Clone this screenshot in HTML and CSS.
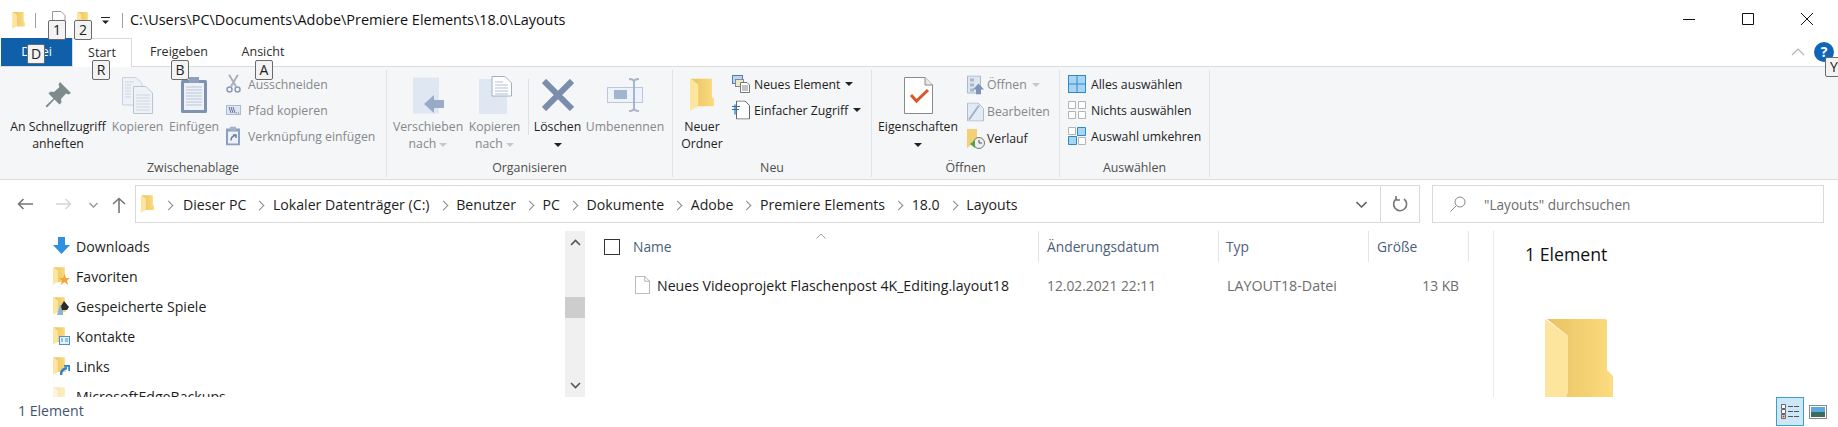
FILE: index.html
```html
<!DOCTYPE html>
<html lang="de">
<head>
<meta charset="utf-8">
<title>Layouts</title>
<link rel="stylesheet" href="styles.css">
</head>
<body>
<svg class="sprite" aria-hidden="true">
  <defs>
    <linearGradient id="fback" x1="0" y1="0" x2="1" y2="0"><stop offset="0" stop-color="#e9c263"/><stop offset="1" stop-color="#fbdc7e"/></linearGradient>
    <symbol id="folder" viewBox="0 0 68 92">
      <path fill="url(#fback)" d="M2 0H60q2 0 2 2V51L68 57V78H21L23 72V17Z"/>
      <path fill="#fde59e" d="M0 0L23 17V72L21 80L0 90Z"/>
    </symbol>
    <symbol id="doc" viewBox="0 0 20 24">
      <path fill="#fff" stroke="currentColor" d="M.5.500H13L19.500 7V23.500H.5Z"/>
      <path fill="none" stroke="currentColor" d="M13 .5V7H19.500"/>
    </symbol>
  </defs>
</svg>

<header class="titlebar">
  <svg class="ic-folder-s"><use href="#folder"/></svg>
  <i class="tsep tsep-a"></i>
  <svg class="ic-qa-doc" viewBox="0 0 15 18"><path fill="#fff" stroke="#9a9a9a" d="M1.500.5H10L14 4.500V17.500H1.500Z"/><path stroke="#d9582a" fill="none" stroke-width="1.500" d="M7 12l2 2 3-5"/></svg>
  <svg class="ic-qa-folder"><use href="#folder"/></svg>
  <svg class="ic-caret-q" viewBox="0 0 9 8"><path fill="#222" d="M0 0H9V1H0ZM1 3.500H8L4.500 7Z"/></svg>
  <i class="tsep tsep-b"></i>
  <span class="path-title">C:\Users\PC\Documents\Adobe\Premiere Elements\18.0\Layouts</span>
  <div class="winctl">
    <svg viewBox="0 0 12 12"><path stroke="#111" d="M0 6.500H12"/></svg>
    <svg viewBox="0 0 12 12"><path fill="none" stroke="#111" d="M.5.500H11.500V11.500H.5Z"/></svg>
    <svg viewBox="0 0 12 12"><path stroke="#111" d="M0 0L12 12M12 0L0 12"/></svg>
  </div>
</header>

<nav class="tabs">
  <div class="tab tab-file">Datei</div>
  <div class="tab tab-start">Start</div>
  <div class="tab tab-share">Freigeben</div>
  <div class="tab tab-view">Ansicht</div>
  <svg class="collapse" viewBox="0 0 14 8"><path fill="none" stroke="#b4b4b4" stroke-width="1.200" d="M1 7L7 1L13 7"/></svg>
  <div class="help">?</div>
</nav>

<section class="ribbon">
  <div class="group g-clip">
    <div class="group-body">
      <div class="big w-pin">
        <div class="big-icon"><svg width="26" height="26" viewBox="0 0 26 26"><path fill="#7e8a8c" d="M15 0L26 11L23.500 12.500L21 11.500L16 17L16.500 20.500L14.500 22.500L9.500 17.500L2 25.500L0.500 24L8.500 16.500L3.500 11.500L5.500 9.500L9 10L14.500 5L13.500 2.500Z"/></svg></div>
        <div class="label">An Schnellzugriff<br>anheften</div>
      </div>
      <div class="big w-copy off">
        <div class="big-icon"><svg width="31" height="37" viewBox="0 0 31 37"><path fill="#eef2f7" stroke="#c6d0de" d="M.5.500H14L20 6.500V28H.5Z"/><path fill="#eef2f7" stroke="#b8c5d6" d="M11.500 9.500H24L30.500 16V36.500H11.500Z"/><path stroke="#cdd6e2" d="M3 5H12M3 8H9M3 11H9M3 14H9M3 17H9M3 20H9M14 18H28M14 21H28M14 24H28M14 27H28M14 30H28M14 33H28"/></svg></div>
        <div class="label">Kopieren</div>
      </div>
      <div class="big w-paste off">
        <div class="big-icon"><svg width="26" height="36" viewBox="0 0 26 36"><rect y="3" width="26" height="33" rx="1.500" fill="#7f92b2"/><rect x="8" y="0" width="10" height="6" fill="#8fa0bc"/><rect x="3" y="6" width="20" height="27" fill="#eef2f8"/><path stroke="#b9c6da" d="M5 10H21M5 13H21M5 16H21M5 19H21M5 22H21M5 25H21M5 28H21"/></svg></div>
        <div class="label">Einfügen</div>
      </div>
      <div class="smallcol off">
        <div class="small"><svg class="s-ic" width="15" height="19" viewBox="0 0 15 19"><path stroke="#a9b2bd" stroke-width="2" fill="none" d="M3 0L10 12M12 0L5 12"/><circle cx="3.500" cy="15" r="2.500" fill="none" stroke="#8c9cb4" stroke-width="1.500"/><circle cx="11.500" cy="15" r="2.500" fill="none" stroke="#8c9cb4" stroke-width="1.500"/></svg><span>Ausschneiden</span></div>
        <div class="small"><svg class="s-ic" width="15" height="10" viewBox="0 0 15 10"><rect x=".5" y=".5" width="14" height="9" fill="#dce6f4" stroke="#a9bad4"/><path stroke="#66758c" d="M3 2L5 8M5 2L7 8M7 2L9 8M10 8H11M12 8H13"/></svg><span>Pfad kopieren</span></div>
        <div class="small"><svg class="s-ic" width="14" height="19" viewBox="0 0 14 19"><rect y="2" width="14" height="17" fill="#8ba0bf"/><rect x="4" width="6" height="4" fill="#a3b3cb"/><rect x="2" y="5" width="10" height="12" fill="#eef2f8"/><path stroke="#6a7f9f" stroke-width="1.500" fill="none" d="M5 14Q5 10 9 9M7 8.500H10V11.500"/></svg><span>Verknüpfung einfügen</span></div>
      </div>
    </div>
    <div class="group-label">Zwischenablage</div>
  </div>

  <div class="group g-org">
    <div class="group-body">
      <div class="big w-move off">
        <div class="big-icon"><svg width="32" height="37" viewBox="0 0 32 37"><rect x="1" y=".5" width="26" height="36" fill="#dfe7f3"/><path fill="#8c9fbd" d="M12 27L22 18V23H32V31H22V36Z" opacity=".85"/></svg></div>
        <div class="label">Verschieben<br>nach <i class="car car-off"></i></div>
      </div>
      <div class="big w-copyto off">
        <div class="big-icon"><svg width="34" height="39" viewBox="0 0 34 39"><rect x="1" y="3" width="28" height="35" fill="#dfe7f3"/><path fill="#fff" stroke="#9fb0c8" d="M14 .5H27L33.500 7V20H14Z"/><path stroke="#b3c0d3" d="M17 6H25M17 9H30M17 12H30M17 15H30M17 18H30"/></svg></div>
        <div class="label">Kopieren<br>nach <i class="car car-off"></i></div>
      </div>
      <i class="vsep"></i>
      <div class="big w-del">
        <div class="big-icon"><svg width="32" height="32" viewBox="0 0 32 32"><path stroke="#7b8dac" stroke-width="6" d="M2 2L30 30M30 2L2 30"/></svg></div>
        <div class="label">Löschen<br><i class="car"></i></div>
      </div>
      <div class="big w-ren off">
        <div class="big-icon"><svg width="36" height="34" viewBox="0 0 36 34"><rect x=".5" y="9.500" width="35" height="15" fill="#eef3fa" stroke="#b9c8de"/><rect x="7" y="12" width="13" height="9" fill="#a3b4cf"/><path stroke="#a6b5cd" stroke-width="2" fill="none" d="M22 1Q27 1 27 4V30Q27 33 22 33M32 1Q27 1 27 4M27 30Q27 33 32 33"/></svg></div>
        <div class="label">Umbenennen</div>
      </div>
    </div>
    <div class="group-label">Organisieren</div>
  </div>

  <div class="group g-new">
    <div class="group-body">
      <div class="big w-newf">
        <div class="big-icon"><svg class="ic-newf"><use href="#folder"/></svg></div>
        <div class="label">Neuer<br>Ordner</div>
      </div>
      <div class="smallcol">
        <div class="small"><svg class="s-ic" width="18" height="18" viewBox="0 0 18 18"><rect x=".5" y=".5" width="10" height="8" fill="#bcd6ee" stroke="#4d7fae"/><rect x="3.500" y="4.500" width="8" height="7" fill="#f0e7c4" stroke="#889"/><path fill="#fff" stroke="#777" d="M8.500 7.500H15L17.500 10V17.500H8.500Z"/><path stroke="#888" d="M10 11H16M10 13H16M10 15H16"/></svg><span>Neues Element <i class="car"></i></span></div>
        <div class="small"><svg class="s-ic" width="18" height="19" viewBox="0 0 18 19"><path fill="#fff" stroke="#666" d="M4.500 .5H13L17.500 5V18.500H4.500Z"/><path stroke="#2c72b5" stroke-width="1.200" d="M0 6H8M0 9H7M3 4V14"/></svg><span>Einfacher Zugriff <i class="car"></i></span></div>
      </div>
    </div>
    <div class="group-label">Neu</div>
  </div>

  <div class="group g-open">
    <div class="group-body">
      <div class="big w-prop">
        <div class="big-icon"><svg width="29" height="37" viewBox="0 0 29 37"><path fill="#fff" stroke="#8a8a8a" d="M.5.500H21L28.500 8V36.500H.5Z"/><path fill="#e8e8e8" stroke="#8a8a8a" d="M21 .5V8H28.500"/><path fill="none" stroke="#d9582a" stroke-width="3" d="M7 18L12.500 24L24 13"/></svg></div>
        <div class="label">Eigenschaften<br><i class="car"></i></div>
      </div>
      <div class="smallcol sc-open">
        <div class="small off"><svg class="s-ic" width="17" height="19" viewBox="0 0 17 19"><rect x=".5" y=".5" width="13" height="17" fill="#dfe6f0" stroke="#aab8cc"/><path fill="#aab8cc" d="M3 3H7V6H3ZM3 8H7V11H3ZM3 13H7V16H3Z"/><path fill="#7f94b2" d="M6 14L11.500 8L17 14H14V19H9V14Z"/></svg><span>Öffnen <i class="car car-off"></i></span></div>
        <div class="small off"><svg class="s-ic" width="17" height="19" viewBox="0 0 17 19"><path fill="#e3eaf4" stroke="#aebdd2" d="M.5.500H11L16.500 6V18.500H.5Z"/><path fill="none" stroke="#9fb0c9" stroke-width="2" d="M2 17L12 3"/></svg><span>Bearbeiten</span></div>
        <div class="small"><svg class="s-ic" width="18" height="20" viewBox="0 0 18 20"><path fill="#f3cf75" d="M0 0H10V14H6L0 19Z"/><circle cx="12" cy="14" r="5.500" fill="#eee" stroke="#777"/><path d="M12 11V14H15" stroke="#555" fill="none"/><path fill="#4fa24a" d="M3 15L8 11V19Z"/></svg><span>Verlauf</span></div>
      </div>
    </div>
    <div class="group-label">Öffnen</div>
  </div>

  <div class="group g-sel">
    <div class="group-body">
      <div class="smallcol">
        <div class="small"><svg class="s-ic" width="18" height="18" viewBox="0 0 18 18"><rect width="18" height="18" fill="#2f88c9"/><path fill="#a9d5f5" d="M1 1H8.500V8.500H1ZM9.500 1H17V8.500H9.500ZM1 9.500H8.500V17H1ZM9.500 9.500H17V17H9.500Z"/></svg><span>Alles auswählen</span></div>
        <div class="small"><svg class="s-ic" width="18" height="18" viewBox="0 0 18 18"><path fill="#fff" stroke="#b4b4b4" d="M.5.500H7.500V7.500H.5ZM10.500.5H17.500V7.500H10.500ZM.5 10.500H7.500V17.500H.5ZM10.500 10.500H17.500V17.500H10.500Z"/></svg><span>Nichts auswählen</span></div>
        <div class="small"><svg class="s-ic" width="18" height="18" viewBox="0 0 18 18"><path fill="#fff" stroke="#b4b4b4" d="M.5.500H7.500V7.500H.5ZM10.500 10.500H17.500V17.500H10.500Z"/><path fill="#a9d5f5" stroke="#2f88c9" d="M9.500.5H17.500V8.500H9.500ZM.5 9.500H8.500V17.500H.5Z"/></svg><span>Auswahl umkehren</span></div>
      </div>
    </div>
    <div class="group-label">Auswählen</div>
  </div>
</section>

<section class="addressrow">
  <svg class="nav-ic" width="16" height="12" viewBox="0 0 16 12"><path fill="none" stroke="#777" stroke-width="1.600" d="M16 6H1.500M6.500 1L1.500 6L6.500 11"/></svg>
  <svg class="nav-ic nav-fwd" width="16" height="12" viewBox="0 0 16 12"><path fill="none" stroke="#d6d6d6" stroke-width="1.600" d="M0 6H14.500M9.500 1L14.500 6L9.500 11"/></svg>
  <svg class="nav-ic nav-drop" width="9" height="6" viewBox="0 0 9 6"><path fill="none" stroke="#9a9a9a" stroke-width="1.500" d="M.5 1L4.500 5L8.500 1"/></svg>
  <svg class="nav-ic nav-up" width="14" height="16" viewBox="0 0 14 16"><path fill="none" stroke="#777" stroke-width="1.600" d="M7 16V1.500M1 7L7 1.500L13 7"/></svg>
  <div class="addr">
    <svg class="ic-addr"><use href="#folder"/></svg>
    <div class="crumbs">
      <span>Dieser PC</span><span>Lokaler Datenträger (C:)</span><span>Benutzer</span><span>PC</span><span>Dokumente</span><span>Adobe</span><span>Premiere Elements</span><span>18.0</span><span class="last">Layouts</span>
    </div>
    <div class="addr-drop"><svg width="11" height="7" viewBox="0 0 11 7"><path fill="none" stroke="#666" stroke-width="1.600" d="M.5 1L5.500 6L10.500 1"/></svg></div>
    <div class="addr-ref"><svg width="16" height="16" viewBox="0 0 16 16"><path fill="none" stroke="#777" stroke-width="1.600" d="M5 2.500A6.500 6.500 0 1 0 12 3M4 0V4H8"/></svg></div>
  </div>
  <div class="search">
    <svg width="16" height="16" viewBox="0 0 16 16"><circle cx="10" cy="6" r="5" fill="none" stroke="#888"/><path stroke="#888" d="M6.500 9.500L.5 15.500"/></svg>
    <span>"Layouts" durchsuchen</span>
  </div>
</section>

<main class="content">
  <aside class="navpane">
    <div class="navrow"><svg class="n-ic" width="17" height="18" viewBox="0 0 17 18"><path fill="#2f8fe0" d="M5 0H12V8H17L8.500 17L0 8H5Z"/></svg><span>Downloads</span></div>
    <div class="navrow"><span class="n-fold"><svg class="n-f"><use href="#folder"/></svg><svg class="n-over" width="11" height="11" viewBox="0 0 11 11"><path fill="#f0a63a" d="M5.500 0L7 4H11L8 6.500L9 11L5.500 8L2 11L3 6.500L0 4H4Z"/></svg></span><span>Favoriten</span></div>
    <div class="navrow"><span class="n-fold"><svg class="n-f"><use href="#folder"/></svg><svg class="n-over" width="13" height="14" viewBox="0 0 13 14"><path fill="#8fb4cf" d="M0 14L3 4H6V14Z"/><path fill="#2a2a2a" d="M7 0L12 6L10 9H5L4 5Z"/></svg></span><span>Gespeicherte Spiele</span></div>
    <div class="navrow"><span class="n-fold"><svg class="n-f"><use href="#folder"/></svg><svg class="n-over" width="11" height="9" viewBox="0 0 11 9"><rect x=".5" y=".5" width="10" height="8" fill="#e4eef8" stroke="#4f93c5"/><path stroke="#4f93c5" d="M2 3H4M2 5H4M6 3H9M6 5H9"/></svg></span><span>Kontakte</span></div>
    <div class="navrow"><span class="n-fold"><svg class="n-f"><use href="#folder"/></svg><svg class="n-over" width="10" height="10" viewBox="0 0 10 10"><path fill="none" stroke="#2d82cf" stroke-width="2.500" d="M1 10Q1 4 7 3M4 0.500H9.500V6"/></svg></span><span>Links</span></div>
    <div class="navrow navrow-fade"><span class="n-fold"><svg class="n-f"><use href="#folder"/></svg></span><span>MicrosoftEdgeBackups</span></div>
  </aside>
  <div class="sbar">
    <svg class="sb-up" width="11" height="7" viewBox="0 0 11 7"><path fill="none" stroke="#555" stroke-width="1.600" d="M1 6L5.500 1.500L10 6"/></svg>
    <div class="thumb"></div>
    <svg class="sb-down" width="11" height="7" viewBox="0 0 11 7"><path fill="none" stroke="#555" stroke-width="1.600" d="M1 1L5.500 5.500L10 1"/></svg>
  </div>
  <div class="files">
    <svg class="sortcaret" width="10" height="6" viewBox="0 0 10 6"><path fill="none" stroke="#9aa3ad" d="M.5 5.500L5 1L9.500 5.500"/></svg>
    <div class="fhead">
      <div class="c-name"><i class="check"></i>Name</div>
      <div class="c-col">Änderungsdatum</div>
      <div class="c-col c-typ">Typ</div>
      <div class="c-col">Größe</div>
    </div>
    <div class="frow">
      <div class="r-name"><svg class="f-ic" width="15" height="18" viewBox="0 0 20 24"><use href="#doc"/></svg>Neues Videoprojekt Flaschenpost 4K_Editing.layout18</div>
      <div class="r-col">12.02.2021 22:11</div>
      <div class="r-col r-typ">LAYOUT18-Datei</div>
      <div class="r-col r-size">13 KB</div>
    </div>
  </div>
  <aside class="preview">
    <div class="p-title">1 Element</div>
    <svg class="p-folder"><use href="#folder"/></svg>
  </aside>
</main>

<footer class="status">
  <span class="st-text">1 Element</span>
  <div class="views">
    <div class="view-on"><svg width="19" height="15" viewBox="0 0 19 15"><path fill="#fff" stroke="#666" d="M.5.500H4.500V4.500H.5ZM.5 5.500H4.500V9.500H.5ZM.5 10.500H4.500V14.500H.5Z"/><path fill="#c0392b" d="M1.500 11.500H3.500V13.500H1.500Z"/><path stroke="#555" stroke-dasharray="5 1" d="M7 2.500H19M7 7.500H19M7 12.500H19"/></svg></div>
    <svg width="18" height="14" viewBox="0 0 18 14"><rect x=".5" y=".5" width="17" height="13" fill="#fff" stroke="#888"/><rect x="2" y="2" width="14" height="5" fill="#5ba8dd"/><rect x="2" y="7" width="14" height="5" fill="#3d6b60"/></svg>
  </div>
</footer>

<div class="tip t-1">1</div>
<div class="tip t-2">2</div>
<div class="tip t-d">D</div>
<div class="tip t-r">R</div>
<div class="tip t-b">B</div>
<div class="tip t-a">A</div>
<div class="tip t-y">Y</div>
</body>
</html>
```

FILE: styles.css
```css
* { box-sizing: border-box; }
html, body { margin: 0; padding: 0; }
body {
  width: 1838px; height: 427px; overflow: hidden; position: relative;
  background: #fff; color: #1e1e1e;
  font-family: "Open Sans", "Noto Sans", "Liberation Sans", sans-serif;
  font-size: 12.25px;
}
i { display: block; font-style: normal; }
svg { display: block; flex: none; }
.sprite { position: absolute; width: 0; height: 0; }

/* Title bar */
.titlebar { height: 33px; display: flex; align-items: center; padding-left: 12px; position: relative; }
.ic-folder-s { width: 13px; height: 17px; margin-top: 7px; }
.tsep { width: 1px; height: 15px; background: #a0a0a0; margin-top: 7px; }
.tsep-a { margin-left: 10px; }
.ic-qa-doc { width: 15px; height: 18px; margin: 6px 0 0 15px; }
.ic-qa-folder { width: 12px; height: 16px; margin: 6px 0 0 11px; }
.ic-caret-q { width: 9px; height: 8px; margin: 8px 0 0 12px; }
.tsep-b { margin-left: 12px; }
.path-title { margin: 6px 0 0 7px; font-size: 14.45px; color: #111; white-space: nowrap; }
.winctl { margin-left: auto; margin-right: 25px; display: flex; gap: 47px; margin-top: 5px; }
.winctl svg { width: 12px; height: 12px; }

/* Tabs */
.tabs { height: 33px; display: flex; align-items: flex-end; padding-left: 1px; position: relative; }
.tab { height: 28px; line-height: 27px; text-align: center; font-size: 12.5px; color: #2c2c2c; }
.tab-file { width: 71px; background: #0f5fa9; color: #fff; }
.tab-start { width: 60px; height: 29px; background: #fff; border: 1px solid #d9dadb; border-bottom: 0; position: relative; top: 1px; z-index: 1; }
.tab-share { width: 94px; }
.tab-view { width: 74px; }
.collapse { margin-left: auto; margin-right: 33px; width: 14px; height: 8px; align-self: center; margin-top: 5px; }
.help { position: absolute; left: 1814px; top: 9px; width: 20px; height: 20px; border-radius: 50%; background: #0f66b8; color: #fff; font-weight: 700; font-size: 14px; line-height: 20px; text-align: center; }

/* Ribbon */
.ribbon { height: 114px; background: #f5f6f7; border-top: 1px solid #dadbdc; border-bottom: 1px solid #dadbdc; display: flex; padding-top: 3px; }
.group { height: 107px; display: flex; flex-direction: column; border-right: 1px solid #e1e3e6; flex: none; }
.g-clip { width: 387px; }
.g-org { width: 286px; }
.g-new { width: 199px; }
.g-open { width: 188px; }
.g-sel { width: 150px; }
.group-body { height: 90px; display: flex; }
.group-label { height: 17px; line-height: 16px; text-align: center; font-size: 12.4px; color: #4e4e4e; }
.big { display: flex; flex-direction: column; align-items: center; flex: none; text-align: center; }
.big-icon { height: 48px; display: flex; align-items: center; justify-content: center; padding-top: 2px; }
.label { line-height: 17px; white-space: nowrap; }
.off, .off .label { color: #85888c; }
.w-pin { width: 96px; margin-left: 10px; }
.w-copy { width: 53px; margin-left: 5px; }
.w-paste { width: 50px; margin-left: 5px; }
.smallcol { padding-top: 1px; margin-left: 7px; }
.small { height: 26px; display: flex; align-items: center; white-space: nowrap; position: relative; padding-left: 22px; }
.s-ic { position: absolute; left: 0; top: 50%; transform: translateY(-50%); }
.small span { display: flex; align-items: center; gap: 5px; }
.sc-open .small { height: 27px; padding-left: 20px; }
.sc-open { margin-left: 9px; }
.car { display: inline-block; width: 0; height: 0; border-left: 4px solid transparent; border-right: 4px solid transparent; border-top: 4px solid #222; vertical-align: middle; }
.car-off { border-top-color: #c5c7ca; }
.w-move { width: 70px; margin-left: 6px; }
.w-copyto { width: 53px; margin-left: 5px; }
.vsep { width: 1px; height: 56px; background: #dfe1e4; margin: 9px 5px 0 7px; }
.w-del { width: 47px; }
.w-ren { width: 76px; margin-left: 6px; }
.w-newf { width: 50px; margin-left: 4px; }
.ic-newf { width: 24px; height: 34px; }
.g-new .smallcol { margin-left: 5px; }
.w-prop { width: 80px; margin-left: 6px; }
.g-sel .smallcol { margin-left: 8px; }
.g-sel .small { padding-left: 23px; }

/* Address row */
.addressrow { height: 51px; display: flex; align-items: flex-start; padding-top: 5px; }
.nav-ic { margin: 13px 0 0 17px; }
.nav-fwd { margin-left: 23px; }
.nav-drop { margin: 17px 0 0 17px; }
.nav-up { margin: 12px 0 0 14px; }
.addr { width: 1285px; height: 38px; margin-left: 9px; border: 1px solid #d9d9d9; display: flex; align-items: center; padding-left: 5px; }
.ic-addr { width: 13px; height: 18px; }
.crumbs { display: flex; margin-left: 29px; font-size: 14.15px; white-space: nowrap; flex: 1; }
.crumbs span { margin-right: 26.6px; position: relative; }
.crumbs span::after { content: ""; position: absolute; right: -17px; top: 7px; width: 6px; height: 6px; border-top: 1.5px solid #888; border-right: 1.5px solid #888; transform: rotate(45deg); }
.crumbs span:first-child::before { content: ""; position: absolute; left: -18px; top: 7px; width: 6px; height: 6px; border-top: 1.5px solid #888; border-right: 1.5px solid #888; transform: rotate(45deg); }
.crumbs .last::after { display: none; }
.addr-drop { width: 37px; height: 100%; display: flex; align-items: center; justify-content: center; }
.addr-ref { width: 39px; height: 100%; border-left: 1px solid #d9d9d9; display: flex; align-items: center; justify-content: center; }
.search { width: 392px; height: 38px; margin-left: 12px; border: 1px solid #d9d9d9; display: flex; align-items: center; padding-left: 17px; gap: 18px; font-size: 13.6px; color: #6d6d6d; }

/* Content */
.content { height: 166px; display: flex; overflow: hidden; }
.navpane { width: 565px; padding: 0 0 0 53px; flex: none; }
.navrow { height: 30px; display: flex; align-items: center; font-size: 14.15px; white-space: nowrap; }
.navrow > span:last-child { margin-left: 6px; }
.n-fold { width: 17px; height: 18px; position: relative; display: block; }
.n-f { width: 13px; height: 18px; }
.n-over { position: absolute; right: 0; bottom: 0; }
.navrow-fade .n-f { opacity: .45; }
.sbar { width: 20px; background: #f0f0f0; display: flex; flex-direction: column; align-items: center; flex: none; }
.sb-up { margin-top: 8px; }
.thumb { width: 100%; height: 21px; margin-top: 51px; background: #cdcdcd; }
.sb-down { margin-top: auto; margin-bottom: 8px; }
.files { width: 908px; position: relative; flex: none; }
.sortcaret { position: absolute; left: 231px; top: 2px; }
.fhead, .frow { display: grid; grid-template-columns: 454px 180px 150px 100px; }
.fhead { height: 32px; color: #4c607a; font-size: 13.8px; padding-bottom: 1px; }
.c-name { display: flex; align-items: center; padding-left: 19px; border-right: 1px solid #e5e5e5; }
.check { width: 16px; height: 16px; border: 1px solid #333; margin-right: 13px; }
.c-col { display: flex; align-items: center; padding-left: 8px; border-right: 1px solid #e5e5e5; }
.c-typ { padding-left: 7px; }
.frow { height: 30px; margin-top: 7px; align-items: center; font-size: 13.8px; color: #6d6d6d; }
.r-name { display: flex; align-items: center; padding-left: 50px; font-size: 14.15px; color: #1c1c1c; white-space: nowrap; }
.f-ic { color: #9a9a9a; margin-right: 7px; }
.r-col { padding-left: 8px; white-space: nowrap; }
.r-typ { font-size: 14.3px; }
.r-size { padding: 0 10px 0 0; text-align: right; }
.preview { flex: 1; border-left: 1px solid #e9e9e9; padding: 11px 0 0 31px; }
.p-title { font-size: 17.7px; line-height: 24px; color: #111; }
.p-folder { width: 68px; height: 92px; margin: 53px 0 0 20px; }

/* Status */
.status { height: 30px; display: flex; align-items: flex-start; padding-left: 18px; }
.st-text { font-size: 14.1px; line-height: 28px; color: #3f5470; }
.views { margin-left: auto; margin-right: 11px; display: flex; align-items: center; gap: 5px; }
.view-on { width: 28px; height: 29px; background: #cce8f8; border: 1px solid #3aa0c8; display: flex; align-items: center; justify-content: center; }

/* Key tips overlay */
.tip { position: absolute; width: 18px; height: 20px; background: #f3f3f3; border: 1px solid #6a6a6a; border-radius: 2px; text-align: center; line-height: 18px; font-size: 14px; color: #222; z-index: 5; }
.t-1 { left: 48px; top: 20px; }
.t-2 { left: 74px; top: 20px; }
.t-d { left: 27px; top: 44px; }
.t-r { left: 92px; top: 60px; }
.t-b { left: 171px; top: 60px; }
.t-a { left: 255px; top: 60px; }
.t-y { left: 1825px; top: 57px; width: 18px; }
```
